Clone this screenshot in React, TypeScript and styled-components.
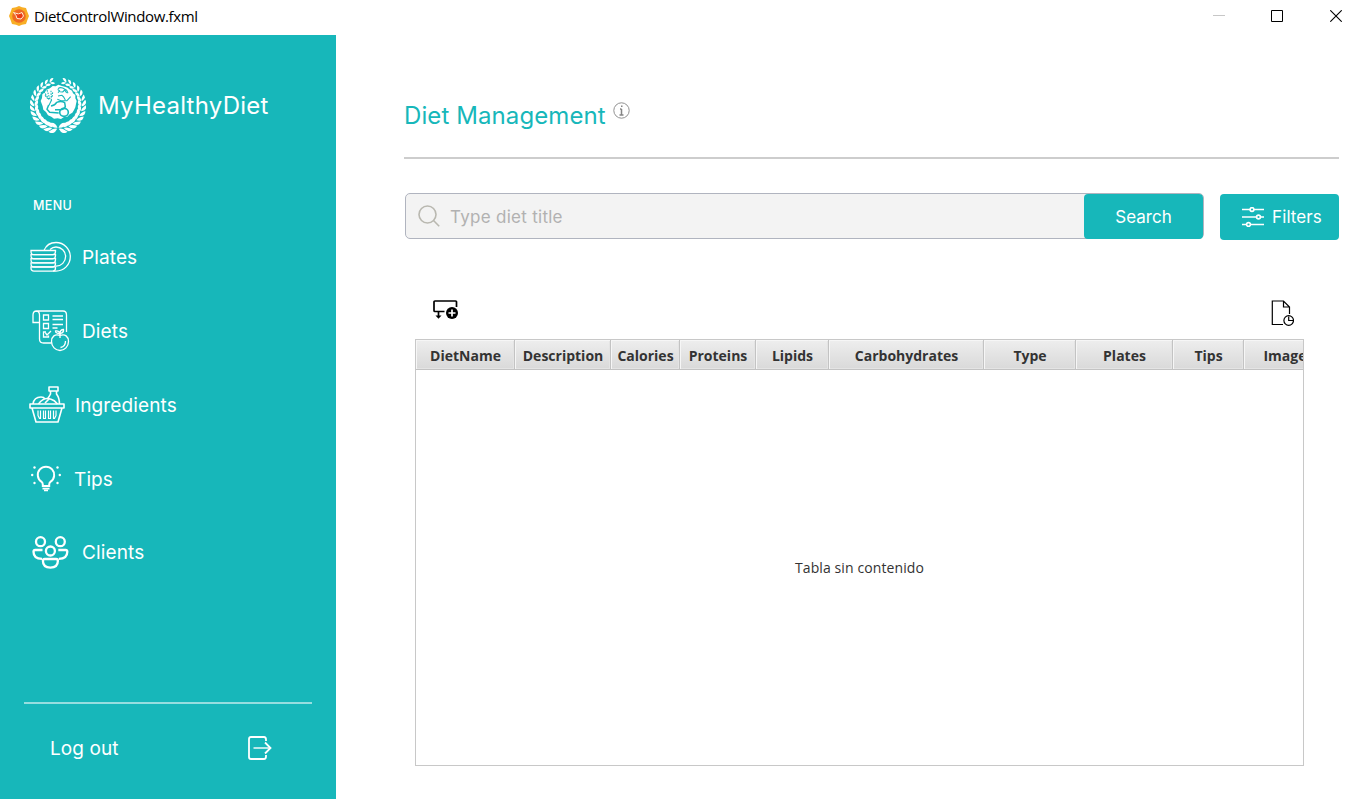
import React from "react";
import styled, { createGlobalStyle } from "styled-components";

const teal = "#17b7ba";
const brandFont = `Inter, "Liberation Sans", sans-serif`;
const systemFont = `"Open Sans", "Noto Sans", sans-serif`;

const GlobalStyle = createGlobalStyle`
  * { box-sizing: border-box; }
  body { margin: 0; background: #fff; }
  svg { display: block; flex: none; }
  button { border: 0; padding: 0; margin: 0; background: none; }
`;

const Window = styled.div`
  display: flex;
  flex-direction: column;
  width: 1363px;
  height: 799px;
  overflow: hidden;
  background: #fff;
`;

const TitleBar = styled.header`
  display: flex;
  align-items: center;
  height: 35px;
  padding: 0 21px 3px 9px;
`;

const WindowTitle = styled.span`
  flex: 1;
  margin-left: 5px;
  font: 15px/20px ${systemFont};
  letter-spacing: -0.36px;
  color: #000;
`;

const WindowControls = styled.div`
  display: flex;
  align-items: center;
  gap: 46px;

  svg:last-child {
    margin-left: 1px;
  }
`;

const Body = styled.div`
  display: flex;
  flex: 1;
`;

const Sidebar = styled.nav`
  display: flex;
  flex-direction: column;
  width: 336px;
  background: ${teal};
  color: #fff;
  font-family: ${brandFont};
`;

const Brand = styled.div`
  display: flex;
  align-items: center;
  gap: 12px;
  margin: 42px 0 0 30px;
  height: 56px;
`;

const Label = styled.span<{ $size: number; $spacing?: number; $drop?: number }>`
  padding-top: ${(p) => p.$drop ?? 0}px;
  font-size: ${(p) => p.$size}px;
  line-height: 1.2;
  letter-spacing: ${(p) => p.$spacing ?? 0}px;
  white-space: nowrap;
`;

const MenuCaption = styled.div`
  margin: 65px 0 0 33px;
  font-size: 12.500px;
  font-weight: 500;
  letter-spacing: 0.4px;
  line-height: 16px;
  height: 16px;
`;

const Menu = styled.div`
  display: flex;
  flex-direction: column;
  margin-top: 6px;
`;

const MenuItem = styled.button<{ $gap: number; $left: number }>`
  display: flex;
  align-items: center;
  height: 73.8px;
  padding-left: ${(p) => p.$left}px;
  gap: ${(p) => p.$gap}px;
  color: inherit;
  font-family: inherit;
`;

const SidebarRule = styled.div`
  height: 2px;
  margin: auto 24px 0;
  background: rgba(255, 255, 255, 0.55);
`;

const LogOut = styled.button`
  display: flex;
  align-items: center;
  justify-content: space-between;
  height: 95px;
  padding: 0 64px 8px 50px;
  color: inherit;
  font-family: inherit;
`;

const Main = styled.main`
  display: flex;
  flex-direction: column;
  flex: 1;
  padding: 0 24px 33px 68px;
  font-family: ${brandFont};
`;

const Heading = styled.h1`
  display: flex;
  gap: 7px;
  height: 55px;
  margin: 67px 0 0;
  font-size: 24px;
  font-weight: 400;
  line-height: 30px;
  color: ${teal};
`;

const Rule = styled.div`
  height: 2px;
  background: #cdcdcd;
`;

const SearchRow = styled.div`
  display: flex;
  justify-content: space-between;
  height: 47px;
  margin: 34px 0 0 1px;
`;

const SearchBox = styled.div`
  display: flex;
  align-items: center;
  width: 799px;
  height: 46px;
  padding-left: 12px;
  border: 1px solid #b0b4bf;
  border-radius: 5px;
  background: #f3f3f3;
`;

const Placeholder = styled.span`
  flex: 1;
  margin-left: 10px;
  padding-top: 2px;
  font-size: 17px;
  letter-spacing: 0.28px;
  color: #b1b1b1;
`;

const ActionButton = styled.button<{ $height: number; $inset?: number }>`
  display: flex;
  align-items: center;
  justify-content: center;
  gap: 8px;
  width: 119px;
  height: ${(p) => p.$height}px;
  padding-left: ${(p) => p.$inset ?? 0}px;
  border-radius: 4px;
  background: ${teal};
  color: #fff;
  font-family: ${brandFont};
`;

const FilterSlot = styled.div`
  padding-top: 1px;
`;

const Toolbar = styled.div`
  display: flex;
  justify-content: space-between;
  align-items: flex-start;
  height: 39px;
  margin: 60px 45px 0 29px;
`;

const Table = styled.section`
  display: flex;
  flex-direction: column;
  flex: 1;
  width: 889px;
  margin-left: 11px;
  border: 1px solid #c8c8c8;
  font-family: ${systemFont};
  color: #333;
`;

const HeaderRow = styled.div`
  display: flex;
  height: 30px;
  overflow: hidden;
  border-bottom: 1px solid #c3c3c3;
`;

const HeaderCell = styled.div<{ $width: number }>`
  flex: none;
  width: ${(p) => p.$width}px;
  padding: 1px 0 0 1px;
  border-right: 1px solid #c3c3c3;
  background: linear-gradient(#eeeeee, #d9d9d9);
  box-shadow: inset 1px 1px #f6f6f6, inset -1px -1px #e4e4e4;
  font-size: 14px;
  font-weight: 700;
  line-height: 29px;
  text-align: center;
  white-space: nowrap;
`;

const EmptyState = styled.div`
  display: flex;
  flex: 1;
  align-items: center;
  justify-content: center;
  padding-bottom: 1px;
  font-size: 14px;
  letter-spacing: 0.1px;
`;

function AppIcon() {
  return (
    <svg width="20" height="20" viewBox="0 0 20 20">
      <path d="M7 1.200 10 0l3 1.200 4 .8 1.400 4L20 10l-1.600 4-1.400 4-4 .8L10 20l-3-1.200-4-.8L1.600 14 0 10l1.600-4L3 2z" fill="#f8ae25" />
      <circle cx="10" cy="10" r="6.800" fill="#ee6a24" />
      <path d="M4.500 6.500 9.500 8 13 6.500l1.500 3.500-2.500 3-4-.5-1-3z" fill="#f03c1c" stroke="#fff2d8" strokeWidth="1" />
      <circle cx="11" cy="10" r="2" fill="#e93c12" />
    </svg>
  );
}

const leafSteps = Array.from({ length: 14 }, (_, i) => 14 + i * 11.8);

function BrandLogo() {
  const branch = leafSteps.map((deg, i) => {
    const size = 0.9 + i * 0.045;
    return (
      <g key={deg} transform={`rotate(${deg} 114 119) translate(114 43) scale(${size})`}>
        <path d="M9 4Q2 5-7-6Q5-11 9 4Z" />
        <path d="M9 6Q2 17-8 12Q-3 2 9 6Z" />
      </g>
    );
  });
  return (
    <svg width="56" height="56" viewBox="30 35 168 168" fill="#fff">
      {branch}
      <g transform="translate(228 0) scale(-1 1)">{branch}</g>
      <path d="M62 107l4-9 1-11 8-6 4-8 11-4 8-7 9 1 8-5 11 4 9 2 8 3 5 5 8 4 3 8 7 5 0 10 4 8-2 9-2 10-4 8-5 8-8 5-7 7-10 1-9 6-10-2-11 1-8-6-10-4-6-10-8-7-2-10z" />
      <g stroke={teal} fill="none" strokeWidth="3.200" strokeLinejoin="round">
        <path d="M71 78l16 24M81 74l9 28M93 76l1 29M75 90l11 13M98 81l-2 16" strokeDasharray="5 3" />
        <path d="M95 103l-8 17" />
        <path d="M114 70q6-5 14-2l12 7 4 9M113 72l6 5-5 5M120 79l8 1 6-6 6 9M114 92l12-2 5 5 5 9M112 102l11 4 18 0 11-12" />
        <path d="M86 119l-5 13 8 9 27 2M93 122q12-2 17-11 14-6 24 1l2 12q-5 10-17 9h-14" strokeWidth="4.500" />
        <ellipse cx="132" cy="141" rx="13" ry="12" strokeWidth="5" />
      </g>
    </svg>
  );
}

function PlatesIcon() {
  return (
    <svg width="42" height="32" viewBox="0 0 42 32" fill="none" stroke="#fff" strokeWidth="1.300">
      <path d="M14 9.500C16 4.500 20.500 1.500 26 1.500a14.300 14.300 0 0 1 0 28.600h-3" />
      <path d="M20 8.500c2-1.800 4-2.500 6-2.500a9.500 9.500 0 0 1 0 19.200" />
      {[9.5, 13.6, 17.7, 21.8, 25.9].map((y) => (
        <path key={y} d={`M1 ${y}h24.500v1q0 3.200-3 3.200H4q-3 0-3-3.200z`} />
      ))}
    </svg>
  );
}

function DietsIcon() {
  return (
    <svg width="38" height="42" viewBox="0 0 38 42" fill="none" stroke="#fff" strokeWidth="1.300">
      <path d="M7.500 12.500H1V5q0-4 3.500-4H31q3.500 0 3.500 4v17M4.500 1q3 .5 3 4v24q0 4 4 4h8" />
      <path d="M11.500 5h5v5h-5zM11.500 13.500h5v5h-5zM14 22h-2.500v5h5v-1.500M13.500 23l1.500 2 4-4M20.500 6h10.500M20.500 9.500h10.500M20.500 14.500h10.500M20.500 18h5" />
      <path d="M28 25.500c-5-2-8.500 1-8.500 6s4 9 8.500 9 8.500-4 8.500-9-3.500-8-8.500-6zM28 28v-5M28 23.500q-4.500 0-4.500-2.500 3.500-.5 4.500 2.500 0-4 3.500-4 .5 3-3 4M33.500 31q0 5.500-5 6.500" />
    </svg>
  );
}

function IngredientsIcon() {
  return (
    <svg width="36" height="37" viewBox="0 0 36 37" fill="none" stroke="#fff" strokeWidth="1.600" strokeLinejoin="round">
      <path d="M1 18h34v4H1zM3 22l4 14h22l4-14" />
      <path d="M9 24.500v5l1.500 3h1v-8M14.500 24.500v8h2v-8M19.500 24.500v8h2v-8M24.500 24.500v8h1l1.500-3v-5" strokeWidth="1.200" />
      <path d="M4 18q1-7 8-7 3 0 4 2M9.500 18q5-7 12-5 4 1 7 5M16 17l4-4" />
      <path d="M20 1h9v4h-9zM21.500 5v3q-1 2-3 5M27.500 5v3q3 4 3 10" />
    </svg>
  );
}

function TipsIcon() {
  return (
    <svg width="30" height="27" viewBox="0 0 30 27" fill="none" stroke="#fff" strokeWidth="2">
      <path d="M11.800 21v-1.500q0-1.500-1.500-2.900a8.200 8.200 0 1 1 9.400 0q-1.500 1.400-1.500 2.900V21z" />
      <path d="M11.500 23.700h7M13 25.500h4" strokeWidth="1.700" />
      <g fill="#fff" stroke="none">
        {[[3.500, 2.500], [1.200, 10], [3.500, 18], [26.500, 2.500], [28.800, 10], [26.500, 18]].map(([x, y]) => (
          <circle key={`${x}-${y}`} cx={x} cy={y} r="1.200" />
        ))}
      </g>
    </svg>
  );
}

function ClientsIcon() {
  return (
    <svg width="37" height="33" viewBox="0 0 37 33" fill="none" stroke="#fff" strokeWidth="2.300">
      <circle cx="8.500" cy="5.700" r="4.500" />
      <circle cx="28.300" cy="5.700" r="4.500" />
      <circle cx="18.400" cy="15" r="4.500" />
      <path d="M10.500 14H3.200Q1.500 14 1.500 15.800q0 7 8.500 7M26.300 14h7.300q1.700 0 1.700 1.800 0 7-8.500 7" />
      <path d="M12.700 23h11.400q1.800 0 1.800 1.800 0 6.800-7.500 6.800t-7.500-6.800q0-1.800 1.800-1.800z" />
    </svg>
  );
}

function LogOutIcon() {
  return (
    <svg width="24" height="24" viewBox="0 0 24 24" fill="none" stroke="#fff" strokeWidth="1.800">
      <path d="M18 5V3.500Q18 1 16 1H3Q1 1 1 3v18q0 2 2 2h13q2 0 2-2.500V19M17 6.500l5.500 5.500-5.500 5.500" />
      <path d="M5.500 12H22" strokeWidth="1.400" />
    </svg>
  );
}

function InfoIcon() {
  return (
    <svg width="17" height="17" viewBox="0 0 17 17" fill="none" stroke="#858585">
      <circle cx="8.500" cy="8.500" r="7.700" strokeWidth=".9" />
      <path d="M8.500 7v6M7 7h1.500M6.500 13h4M8 4.200h1.500" strokeWidth="1.500" />
    </svg>
  );
}

function SearchIcon() {
  return (
    <svg width="22" height="22" viewBox="0 0 22 22" fill="none" stroke="#b9b8b0" strokeWidth="1.600">
      <circle cx="9.500" cy="9.500" r="8.500" />
      <path d="M15.500 15.500l5.700 5.700" />
    </svg>
  );
}

function FiltersIcon() {
  return (
    <svg width="22" height="20" viewBox="0 0 22 20" fill={teal} stroke="#fff" strokeWidth="1.600">
      <path d="M0 2.500h22M0 10h22M0 17.500h22" />
      <circle cx="10" cy="2.500" r="1.900" />
      <circle cx="16.500" cy="10" r="1.900" />
      <circle cx="6.500" cy="17.500" r="1.900" />
    </svg>
  );
}

function AddRowIcon() {
  return (
    <svg width="26" height="20" viewBox="0 0 26 20" fill="none" stroke="#000" strokeWidth="1.700">
      <path d="M23.500 7V2q0-1-1-1H2Q1 1 1 2v8.500q0 1 1 1h9.500M5.500 11.500V17" />
      <path d="M2.500 15.500h6l-3 3.200z" fill="#000" stroke="none" />
      <circle cx="19" cy="13" r="6" fill="#000" stroke="none" />
      <path d="M19 9.500v7M15.500 13h7" stroke="#fff" strokeWidth="1.700" />
    </svg>
  );
}

function ReportIcon() {
  return (
    <svg width="23" height="26" viewBox="0 0 23 26" fill="none" stroke="#000" strokeWidth="1.200">
      <path d="M12 24.500H1.300V1h11.200l6 6V14M12.500 1v6h6" />
      <circle cx="17.700" cy="20.500" r="4.800" />
      <path d="M17.700 16.500v4H22" />
    </svg>
  );
}

const menuItems = [
  { label: "Plates", icon: <PlatesIcon />, left: 30, gap: 10, drop: 2 },
  { label: "Diets", icon: <DietsIcon />, left: 32, gap: 12, drop: 4 },
  { label: "Ingredients", icon: <IngredientsIcon />, left: 29, gap: 10, drop: 4 },
  { label: "Tips", icon: <TipsIcon />, left: 31, gap: 13, drop: 4 },
  { label: "Clients", icon: <ClientsIcon />, left: 32, gap: 13, drop: 2 },
];

const columns: [string, number][] = [
  ["DietName", 99],
  ["Description", 96],
  ["Calories", 69],
  ["Proteins", 76],
  ["Lipids", 73],
  ["Carbohydrates", 155],
  ["Type", 92],
  ["Plates", 97],
  ["Tips", 71],
  ["Image", 82],
];

export default function App() {
  return (
    <Window>
      <GlobalStyle />
      <TitleBar>
        <AppIcon />
        <WindowTitle>DietControlWindow.fxml</WindowTitle>
        <WindowControls>
          <svg width="12" height="12" stroke="#c7c7c7"><path d="M0 5.500h12" /></svg>
          <svg width="12" height="12" fill="none" stroke="#000"><path d="M.5.5h11v11H.5z" /></svg>
          <svg width="12" height="12" stroke="#000" strokeWidth="1.100"><path d="M.3.300l11.400 11.400M11.700.3L.3 11.700" /></svg>
        </WindowControls>
      </TitleBar>
      <Body>
        <Sidebar>
          <Brand>
            <BrandLogo />
            <Label $size={24} $spacing={0.25} $drop={2}>MyHealthyDiet</Label>
          </Brand>
          <MenuCaption>MENU</MenuCaption>
          <Menu>
            {menuItems.map(({ label, icon, left, gap, drop }) => (
              <MenuItem key={label} $left={left} $gap={gap}>
                {icon}
                <Label $size={19} $spacing={0.12} $drop={drop}>{label}</Label>
              </MenuItem>
            ))}
          </Menu>
          <SidebarRule />
          <LogOut>
            <Label $size={19} $spacing={0.1} $drop={4}>Log out</Label>
            <LogOutIcon />
          </LogOut>
        </Sidebar>
        <Main>
          <Heading>
            <Label $size={24} $spacing={0.1}>Diet Management</Label>
            <InfoIcon />
          </Heading>
          <Rule />
          <SearchRow>
            <SearchBox>
              <SearchIcon />
              <Placeholder>Type diet title</Placeholder>
              <ActionButton $height={45}>
                <Label $size={17} $drop={2}>Search</Label>
              </ActionButton>
            </SearchBox>
            <FilterSlot>
              <ActionButton $height={46} $inset={5}>
                <FiltersIcon />
                <Label $size={17} $spacing={0.1}>Filters</Label>
              </ActionButton>
            </FilterSlot>
          </SearchRow>
          <Toolbar>
            <AddRowIcon />
            <ReportIcon />
          </Toolbar>
          <Table>
            <HeaderRow>
              {columns.map(([name, width]) => (
                <HeaderCell key={name} $width={width}>{name}</HeaderCell>
              ))}
            </HeaderRow>
            <EmptyState>Tabla sin contenido</EmptyState>
          </Table>
        </Main>
      </Body>
    </Window>
  );
}
